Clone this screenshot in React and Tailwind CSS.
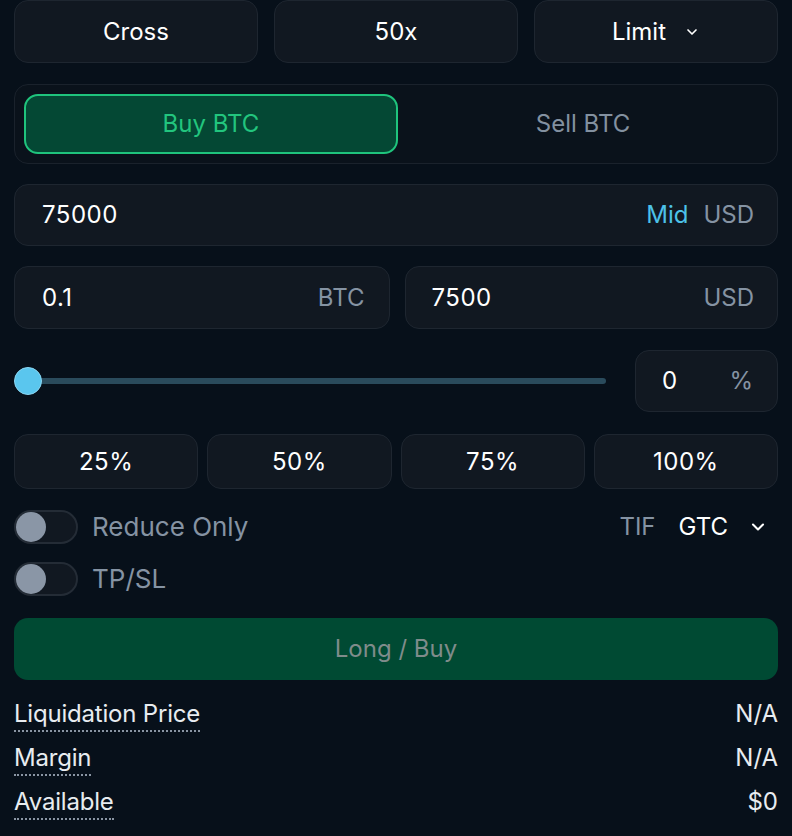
import React from "react";

function Chevron({ className }) {
  return (
    <svg viewBox="0 0 24 24" fill="none" stroke="currentColor" strokeWidth="2.5" strokeLinecap="round" strokeLinejoin="round" className={className}>
      <path d="M6 9l6 6 6-6" />
    </svg>
  );
}

function Box({ className = "", children }) {
  return (
    <div className={"rounded-[14px] border border-[#1e2630] bg-[#111821] " + className}>{children}</div>
  );
}

function Toggle({ label }) {
  return (
    <div className="flex items-center gap-[14px]">
      <div className="flex h-[34px] w-[64px] items-center rounded-full border-2 border-[#242c36] bg-[#111821] px-0">
        <div className="h-[30px] w-[30px] rounded-full bg-[#8a96a6]" />
      </div>
      <span className="text-[26px] leading-[34px] text-[#8593a3]">{label}</span>
    </div>
  );
}

function InfoRow({ label, value }) {
  return (
    <div className="flex h-[44px] items-start justify-between">
      <span className="border-b-2 border-dotted border-[#8a95a3] text-[24px] leading-[32px] tracking-[-0.2px] text-[#e8ecf0]">{label}</span>
      <span className="text-[24px] leading-[32px] text-[#e8ecf0]">{value}</span>
    </div>
  );
}

export default function App() {
  return (
    <div
      className="flex h-[836px] w-[792px] flex-col overflow-hidden bg-[#07101a] px-[14px] text-white"
      style={{ fontFamily: "Inter, 'Noto Sans', sans-serif" }}
    >
      {/* top row */}
      <div className="grid h-[63px] grid-cols-3 gap-[16px]">
        <Box className="flex items-center justify-center">
          <span className="text-[24px] font-normal">Cross</span>
        </Box>
        <Box className="flex items-center justify-center">
          <span className="text-[24px] font-normal">50x</span>
        </Box>
        <Box className="flex items-center justify-center gap-[18px]">
          <span className="text-[24px] font-normal">Limit</span>
          <Chevron className="h-[16px] w-[16px] text-white" />
        </Box>
      </div>

      {/* buy/sell */}
      <div className="mt-[21px] flex h-[80px] rounded-[14px] border border-[#1a222c] bg-[#0a121b] p-[9px]">
        <div className="flex flex-1 items-center justify-center rounded-[14px] border-2 border-[#1fc47d] bg-[#044834]">
          <span className="text-[24px] font-normal text-[#22c57e]">Buy BTC</span>
        </div>
        <div className="flex flex-1 items-center justify-center">
          <span className="text-[24px] font-normal text-[#8391a0]">Sell BTC</span>
        </div>
      </div>

      {/* price */}
      <Box className="mt-[20px] flex h-[62px] items-center justify-between pl-[27px] pr-[23px]">
        <span className="text-[24px] tracking-[0.5px]">75000</span>
        <div className="flex items-center gap-[15px] text-[24px]">
          <span className="text-[#4cc1e8]">Mid</span>
          <span className="text-[#8593a3]">USD</span>
        </div>
      </Box>

      {/* size */}
      <div className="mt-[20px] flex h-[63px] gap-[15px]">
        <Box className="flex flex-1 items-center justify-between pl-[27px] pr-[24px]">
          <span className="text-[24px] tracking-[0.5px]">0.1</span>
          <span className="text-[24px] text-[#8593a3]">BTC</span>
        </Box>
        <Box className="flex flex-1 items-center justify-between pl-[26px] pr-[23px]">
          <span className="text-[24px] tracking-[0.5px]">7500</span>
          <span className="text-[24px] text-[#8593a3]">USD</span>
        </Box>
      </div>

      {/* slider */}
      <div className="mt-[21px] flex h-[62px] items-center gap-[29px]">
        <div className="relative flex h-[28px] flex-1 items-center">
          <div className="ml-[14px] h-[6px] flex-1 rounded-full bg-[#2a4b5c]" />
          <div className="absolute left-0 top-0 h-[28px] w-[28px] rounded-full border border-[#8ad6f2] bg-[#5ac6ee]" />
        </div>
        <Box className="flex h-[62px] w-[143px] items-center justify-between pl-[26px] pr-[24px]">
          <span className="text-[24px]">0</span>
          <span className="text-[24px] text-[#8593a3]">%</span>
        </Box>
      </div>

      {/* percent buttons */}
      <div className="mt-[22px] grid h-[55px] grid-cols-4 gap-[9px]">
        {["25%", "50%", "75%", "100%"].map((p) => (
          <Box key={p} className="flex items-center justify-center">
            <span className="text-[24px] font-normal tracking-[0.5px]">{p}</span>
          </Box>
        ))}
      </div>

      {/* toggles */}
      <div className="mt-[21px] flex h-[34px] items-center justify-between">
        <Toggle label="Reduce Only" />
        <div className="flex items-center pr-[10px]">
          <span className="text-[24px] text-[#8593a3]">TIF</span>
          <span className="ml-[23px] text-[24px] font-normal">GTC</span>
          <Chevron className="ml-[20px] h-[20px] w-[20px] text-white" />
        </div>
      </div>
      <div className="mt-[18px] flex h-[34px] items-center">
        <Toggle label="TP/SL" />
      </div>

      {/* long/buy */}
      <div className="mt-[22px] flex h-[62px] items-center justify-center rounded-[14px] bg-[#004a33]">
        <span className="text-[24px] font-normal text-[#7f8c8b]">Long / Buy</span>
      </div>

      {/* info */}
      <div className="mt-[18px] flex flex-col">
        <InfoRow label="Liquidation Price" value="N/A" />
        <InfoRow label="Margin" value="N/A" />
        <InfoRow label="Available" value="$0" />
      </div>
    </div>
  );
}
